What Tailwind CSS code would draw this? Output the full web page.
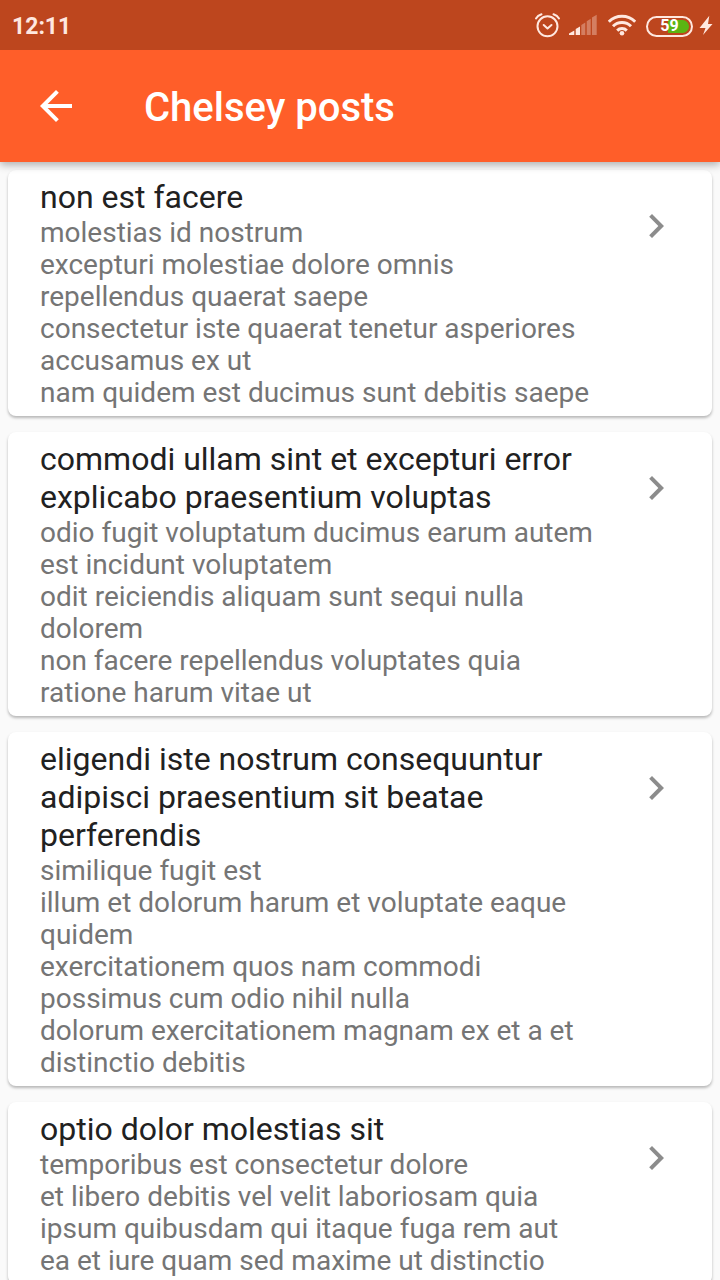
<!DOCTYPE html>
<html lang="en">
<head>
<meta charset="utf-8">
<meta name="viewport" content="width=device-width, initial-scale=1">
<title>Chelsey posts</title>
<script src="https://cdn.jsdelivr.net/npm/@tailwindcss/browser@4"></script>
</head>
<body class="flex h-screen flex-col overflow-hidden bg-[#fafafa] font-[Roboto,sans-serif]">
  <div class="relative z-10 shrink-0 bg-[#ff5e29] shadow-[0_3px_8px_rgba(0,0,0,0.3)]">
    <div class="flex h-[50px] items-center justify-between bg-[#bd461e] pt-0.5 pr-[7px] pl-3 text-[#ffe8e0]">
      <time class="pt-0.5 text-[23px] leading-7 font-bold">12:11</time>
      <div class="flex items-center">
        <svg class="mr-2 h-7 w-7" viewBox="0 0 28 28" fill="none" stroke="currentColor" stroke-width="2" stroke-linecap="round" stroke-linejoin="round" aria-label="Alarm">
          <circle cx="13.500" cy="14.300" r="10"/><path d="M9.700 13l3.800 3.500L17.500 13M2 6.500Q3.700 3.500 7.500 2.300M25 6.500Q23.300 3.500 19.500 2.300"/>
        </svg>
        <svg class="mr-2.5 h-7 w-7 overflow-visible" viewBox="0 0 28 28" fill="currentColor" aria-label="Signal">
          <path d="M-1 21.500l5.300-3v4.500H-1zM5.700 17l4.300-2.500V23H5.700z"/>
          <path fill-opacity=".35" d="M11.300 13l4-2.500V23h-4zM16.700 9.300l4-2.500V23h-4zM22 5.500l4.700-2.700V23H22z"/>
        </svg>
        <svg class="mr-2.5 h-7 w-7" viewBox="0 0 28 28" fill="none" stroke="currentColor" stroke-width="3" aria-label="Wi-Fi">
          <path d="M.8 9.800a18.500 18.500 0 0 1 26.400 0M5 14.300a12.600 12.600 0 0 1 18 0M9.200 18.600a6.800 6.800 0 0 1 9.600 0"/><circle cx="14" cy="21.300" r="2.300" fill="currentColor" stroke="none"/>
        </svg>
        <div class="mr-1.5 h-[21px] w-[47px] rounded-full border-2 border-current p-0.5">
          <div class="flex h-full items-center justify-center rounded-full bg-linear-to-r from-transparent from-45% to-[#5bb513] to-45% text-base leading-none font-bold text-white">59</div>
        </div>
        <svg class="h-7 w-3.5" viewBox="0 0 14 28" fill="currentColor" aria-label="Charging"><path d="M10.300 3.700L.5 16H6.500L4 23 13.500 12H9z"/></svg>
      </div>
    </div>
    <header class="flex h-28 items-center px-8 text-white">
      <button type="button" aria-label="Back" class="mr-16 h-12 w-12">
        <svg class="h-12 w-12" viewBox="0 0 24 24" fill="currentColor"><path d="M20 11H7.830l5.590-5.590L12 4l-8 8 8 8 1.410-1.410L7.830 13H20v-2z"/></svg>
      </button>
      <h1 class="pt-1 text-[40px] leading-12 font-medium">Chelsey posts</h1>
    </header>
  </div>

  <main class="flex-1 overflow-hidden px-2 py-2">
    <ul class="flex flex-col gap-4">
      <li><a href="#post-1" class="flex items-start rounded-lg bg-white px-8 pt-2 pb-[7px] shadow-[0_2px_3px_rgba(0,0,0,0.27)]">
        <div class="min-w-0 flex-1 pr-4">
          <h2 class="text-[32px] leading-[38px] text-[#212121]">non est facere</h2>
          <p class="pt-px text-[28px] leading-8 text-[#757575]">molestias id nostrum<br>excepturi molestiae dolore omnis<br>repellendus quaerat saepe<br>consectetur iste quaerat tenetur asperiores accusamus ex ut<br>nam quidem est ducimus sunt debitis saepe</p>
        </div>
        <svg class="mt-6 h-12 w-12 shrink-0 text-[#8c8c8c]" viewBox="0 0 24 24" fill="currentColor" aria-hidden="true"><path d="M10 6L8.590 7.410 13.170 12l-4.580 4.590L10 18l6-6z"/></svg>
      </a></li>
      <li><a href="#post-2" class="flex items-start rounded-lg bg-white px-8 pt-2 pb-[7px] shadow-[0_2px_3px_rgba(0,0,0,0.27)]">
        <div class="min-w-0 flex-1 pr-4">
          <h2 class="text-[32px] leading-[38px] text-[#212121]">commodi ullam sint et excepturi error explicabo praesentium voluptas</h2>
          <p class="pt-px text-[28px] leading-8 text-[#757575]">odio fugit voluptatum ducimus earum autem est incidunt voluptatem<br>odit reiciendis aliquam sunt sequi nulla<br>dolorem<br>non facere repellendus voluptates quia<br>ratione harum vitae ut</p>
        </div>
        <svg class="mt-6 h-12 w-12 shrink-0 text-[#8c8c8c]" viewBox="0 0 24 24" fill="currentColor" aria-hidden="true"><path d="M10 6L8.590 7.410 13.170 12l-4.580 4.590L10 18l6-6z"/></svg>
      </a></li>
      <li><a href="#post-3" class="flex items-start rounded-lg bg-white px-8 pt-2 pb-[7px] shadow-[0_2px_3px_rgba(0,0,0,0.27)]">
        <div class="min-w-0 flex-1 pr-4">
          <h2 class="text-[32px] leading-[38px] text-[#212121]">eligendi iste nostrum consequuntur adipisci praesentium sit beatae perferendis</h2>
          <p class="pt-px text-[28px] leading-8 text-[#757575]">similique fugit est<br>illum et dolorum harum et voluptate eaque quidem<br>exercitationem quos nam commodi<br>possimus cum odio nihil nulla<br>dolorum exercitationem magnam ex et a et distinctio debitis</p>
        </div>
        <svg class="mt-6 h-12 w-12 shrink-0 text-[#8c8c8c]" viewBox="0 0 24 24" fill="currentColor" aria-hidden="true"><path d="M10 6L8.590 7.410 13.170 12l-4.580 4.590L10 18l6-6z"/></svg>
      </a></li>
      <li><a href="#post-4" class="flex items-start rounded-lg bg-white px-8 pt-2 pb-[7px] shadow-[0_2px_3px_rgba(0,0,0,0.27)]">
        <div class="min-w-0 flex-1 pr-4">
          <h2 class="text-[32px] leading-[38px] text-[#212121]">optio dolor molestias sit</h2>
          <p class="pt-px text-[28px] leading-8 text-[#757575]">temporibus est consectetur dolore<br>et libero debitis vel velit laboriosam quia<br>ipsum quibusdam qui itaque fuga rem aut<br>ea et iure quam sed maxime ut distinctio</p>
        </div>
        <svg class="mt-6 h-12 w-12 shrink-0 text-[#8c8c8c]" viewBox="0 0 24 24" fill="currentColor" aria-hidden="true"><path d="M10 6L8.590 7.410 13.170 12l-4.580 4.590L10 18l6-6z"/></svg>
      </a></li>
    </ul>
  </main>
</body>
</html>
